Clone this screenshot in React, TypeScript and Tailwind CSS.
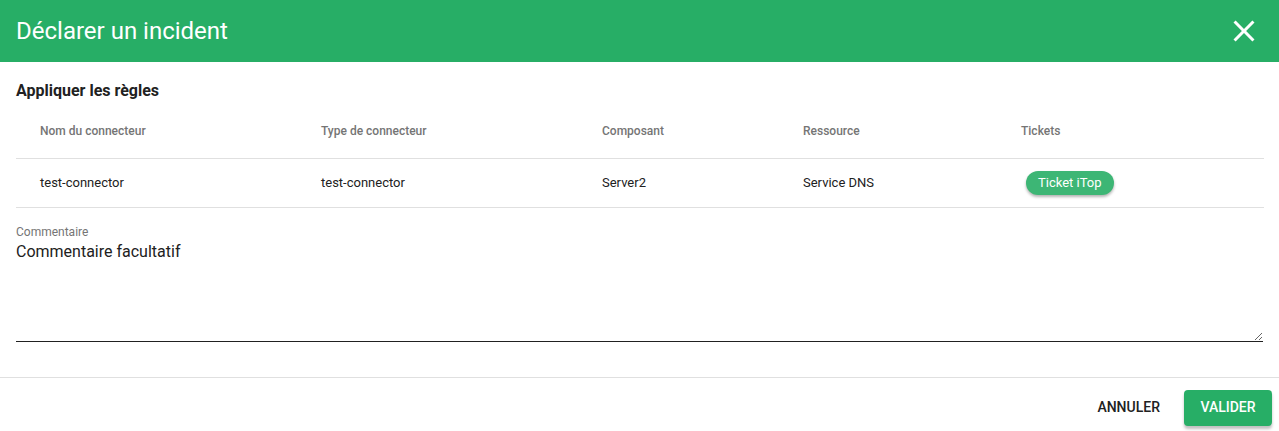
import React from 'react';

const columns = ['Nom du connecteur', 'Type de connecteur', 'Composant', 'Ressource', 'Tickets'];

const rows = [
    {
        name: 'test-connector',
        type: 'test-connector',
        component: 'Server2',
        resource: 'Service DNS',
        tickets: ['Ticket iTop'],
    },
];

const CloseIcon = () => (
    <svg width="36" height="36" viewBox="0 0 24 24" fill="white">
        <path d="M19 6.41 17.59 5 12 10.59 6.41 5 5 6.41 10.59 12 5 17.59 6.41 19 12 13.41 17.59 19 19 17.59 13.41 12z" />
    </svg>
);

export default function App() {
    return (
        <div className="w-[1279px] h-[431px] bg-white flex flex-col font-['Roboto',sans-serif] text-[#212121]">
            {/* title bar */}
            <div className="h-[62px] bg-[#27ae66] flex items-center justify-between pl-4 pr-[17px]">
                <div className="text-[24px] text-white leading-8">Déclarer un incident</div>
                <button className="flex items-center justify-center">
                    <CloseIcon />
                </button>
            </div>

            {/* body */}
            <div className="px-4 pt-[17px] flex flex-col">
                <div className="text-[16px] font-bold leading-6">Appliquer les règles</div>
                <table className="w-[1248px] border-collapse">
                    <thead>
                        <tr className="h-[55px] border-b border-[#e0e0e0]">
                            <th className="w-[305px] pl-6 pt-[2px] text-left text-[12px] font-medium text-[#757575]">{columns[0]}</th>
                            <th className="w-[281px] pt-[2px] text-left text-[12px] font-medium text-[#757575]">{columns[1]}</th>
                            <th className="w-[201px] pt-[2px] text-left text-[12px] font-medium text-[#757575]">{columns[2]}</th>
                            <th className="w-[218px] pt-[2px] text-left text-[12px] font-medium text-[#757575]">{columns[3]}</th>
                            <th className="pt-[2px] text-left text-[12px] font-medium text-[#757575]">{columns[4]}</th>
                        </tr>
                    </thead>
                    <tbody>
                        {rows.map((row) => (
                            <tr key={row.name} className="h-[49px] border-b border-[#e0e0e0] text-[13px] text-[#212121]">
                                <td className="pl-6">{row.name}</td>
                                <td>{row.type}</td>
                                <td>{row.component}</td>
                                <td>{row.resource}</td>
                                <td>
                                    {row.tickets.map((ticket) => (
                                        <span
                                            key={ticket}
                                            className="ml-[5px] inline-flex items-center h-6 px-3 rounded-full bg-[#3db675] text-white text-[13px] shadow-[0_2px_3px_rgba(0,0,0,0.3)]"
                                        >
                                            {ticket}
                                        </span>
                                    ))}
                                </td>
                            </tr>
                        ))}
                    </tbody>
                </table>

                {/* comment field */}
                <div className="pt-[16px] flex flex-col">
                    <label className="text-[12px] leading-4 text-[#757575]">Commentaire</label>
                    <textarea
                        defaultValue="Commentaire facultatif"
                        className="h-[102px] text-[16px] leading-6 text-[#212121] border-b border-[#212121] outline-none resize-y"
                    />
                </div>
            </div>

            {/* actions */}
            <div className="mt-[35px] border-t border-[#e0e0e0] flex-1 flex items-start justify-end pt-3 pr-[7px] gap-2">
                <button className="h-9 px-4 text-[14px] font-medium text-[#212121] uppercase">Annuler</button>
                <button className="h-9 w-[88px] rounded-sm bg-[#27ae66] text-[14px] font-medium text-white uppercase shadow-[0_3px_3px_rgba(0,0,0,0.25)]">
                    Valider
                </button>
            </div>
        </div>
    );
}
